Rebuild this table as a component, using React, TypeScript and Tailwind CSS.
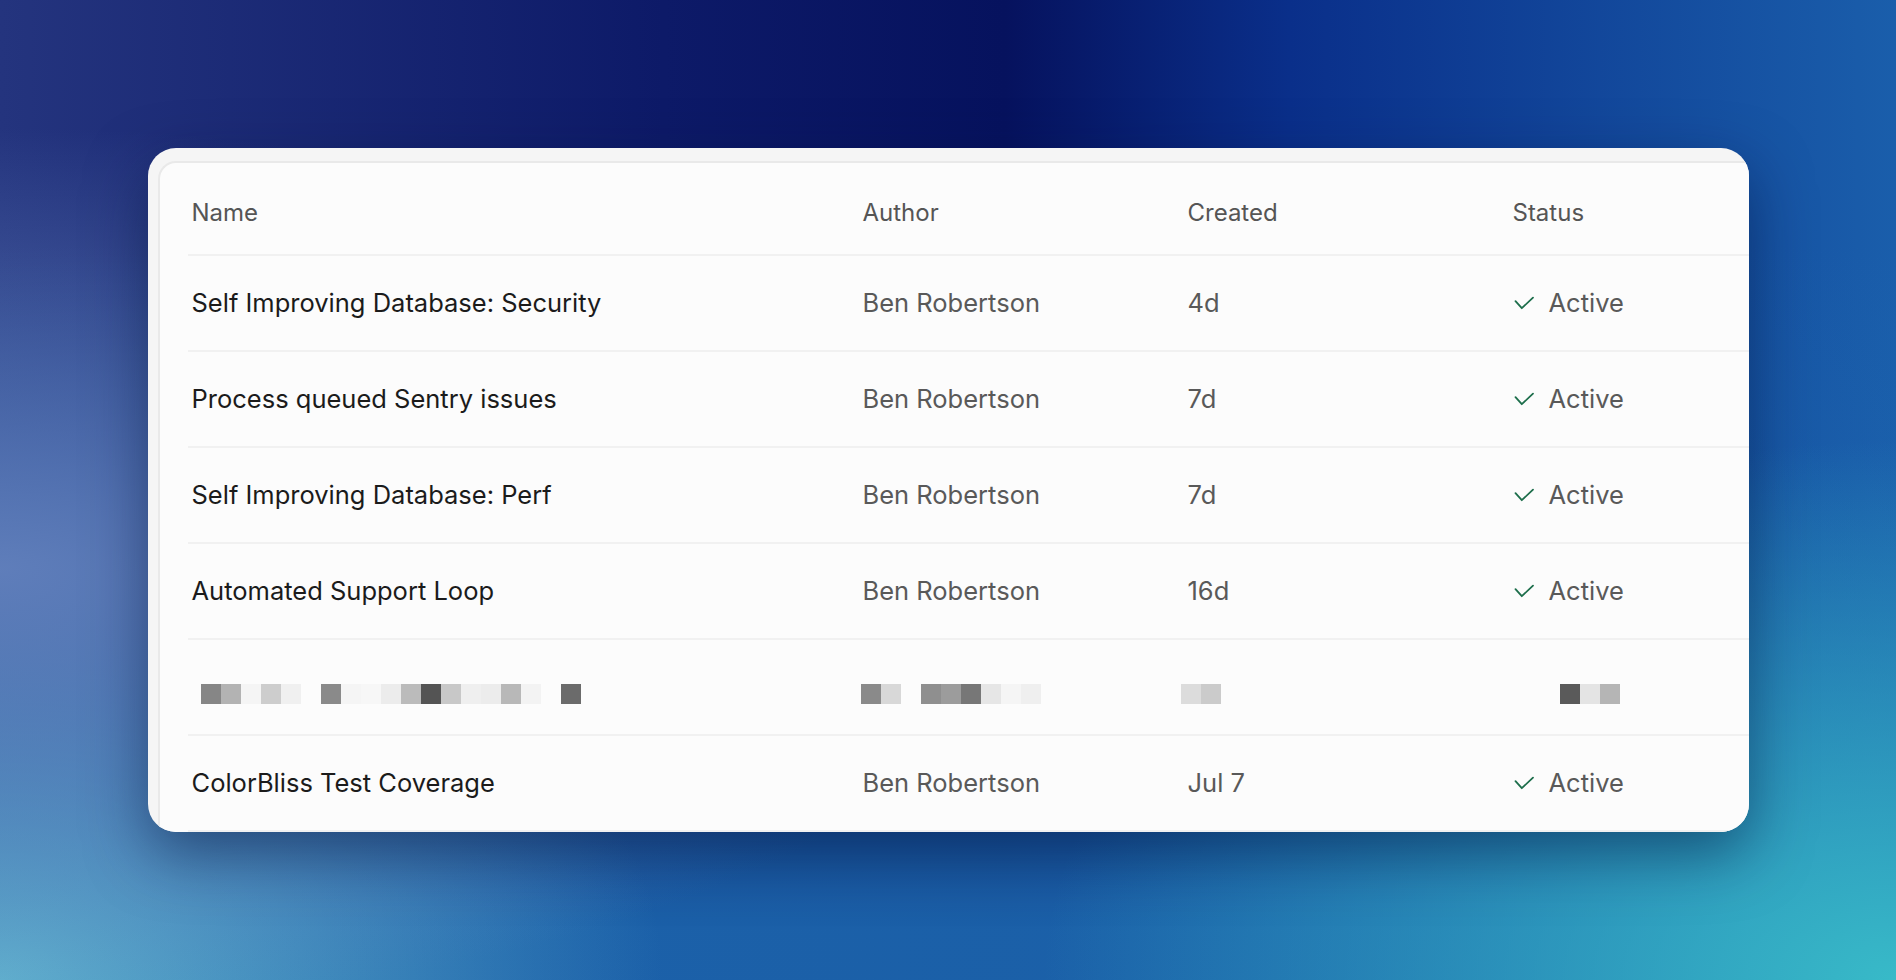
import type { ReactNode } from "react";

type Row = {
  name: string;
  author: string;
  created: string;
};

const rows: Row[] = [
  { name: "Self Improving Database: Security", author: "Ben Robertson", created: "4d" },
  { name: "Process queued Sentry issues", author: "Ben Robertson", created: "7d" },
  { name: "Self Improving Database: Perf", author: "Ben Robertson", created: "7d" },
  { name: "Automated Support Loop", author: "Ben Robertson", created: "16d" },
];

// redacted row, one entry per 20px block (null = empty)
const blurName = ["#868686", "#b3b3b3", "#f5f5f5", "#cdcdcd", "#f0f0f0", null, "#8a8a8a", "#f5f5f5", "#f7f7f7", "#ececec", "#bbbbbb", "#545454", "#c8c8c8", "#efefef", "#ececec", "#b8b8b8", "#f3f3f3", null, "#6b6b6b"];
const blurAuthor = ["#8a8a8a", "#d8d8d8", null, "#8f8f8f", "#9c9c9c", "#777777", "#e6e6e6", "#f5f5f5", "#efefef"];
const blurCreated = ["#dcdcdc", "#cbcbcb"];
const blurStatus = ["#5a5a5a", "#e4e4e4", "#b5b5b5"];

function Blocks({ colors }: { colors: (string | null)[] }) {
  return (
    <div className="flex">
      {colors.map((c, i) => (
        <div key={i} className="h-[20px] w-[20px]" style={{ backgroundColor: c ?? "transparent" }} />
      ))}
    </div>
  );
}

function Check() {
  return (
    <svg width="20" height="14" viewBox="0 0 20 14" fill="none" className="shrink-0">
      <path d="M1.5 5.2 L7.8 12.2 L19 1.6" stroke="#1d6e4b" strokeWidth="1.8" strokeLinecap="round" strokeLinejoin="round" />
    </svg>
  );
}

function Line({ children, className = "" }: { children: ReactNode; className?: string }) {
  return (
    <div className={`flex h-[96px] items-center border-b-2 border-[#f1f1f1] ${className}`}>
      {children}
    </div>
  );
}

function Status() {
  return (
    <div className="flex items-center gap-[15px] pl-[6px] text-[#595959]">
      <Check />
      <span>Active</span>
    </div>
  );
}

export default function App() {
  return (
    <div className="flex h-[980px] w-full items-center justify-center overflow-hidden bg-[radial-gradient(ellipse_55%_45%_at_0%_58%,rgba(98,128,188,0.95),transparent),radial-gradient(ellipse_45%_55%_at_100%_100%,rgba(56,186,200,1),transparent),radial-gradient(ellipse_35%_45%_at_0%_100%,rgba(96,176,206,1),transparent),linear-gradient(to_bottom,transparent_25%,rgba(28,100,172,0.95)_95%),linear-gradient(to_right,#24347e,#0d1a68_35%,#06125e_53%,#0a2f8a_68%,#1a5eab)] font-['Inter',sans-serif]">
      <div className="h-[684px] w-[1601px] overflow-hidden rounded-[28px] bg-[#f5f5f5] pl-[10px] pt-[13px] shadow-[0_22px_60px_rgba(2,18,60,0.5)]">
        <div className="h-[720px] w-[1640px] rounded-tl-[18px] border-l-2 border-t-2 border-[#e9e9e9] bg-[#fcfcfc] pl-[28px]">
          <div className="flex h-[93px] items-center border-b-2 border-[#f1f1f1] pt-[9px] text-[24px] text-[#555555]">
            <div className="w-[670px] pl-[4px]">Name</div>
            <div className="w-[325px] pl-[5px]">Author</div>
            <div className="w-[325px] pl-[5px]">Created</div>
            <div className="pl-[5px]">Status</div>
          </div>

          {rows.map((r) => (
            <Line key={r.name} className="text-[25.5px]">
              <div className="w-[670px] pl-[4px] text-[#1b1b1b]">{r.name}</div>
              <div className="w-[325px] pl-[5px] text-[#595959]">{r.author}</div>
              <div className="w-[325px] pl-[5px] text-[#595959]">{r.created}</div>
              <Status />
            </Line>
          ))}

          <Line>
            <div className="mt-[13px] w-[670px] pl-[13px]">
              <Blocks colors={blurName} />
            </div>
            <div className="mt-[13px] w-[325px] pl-[3px]">
              <Blocks colors={blurAuthor} />
            </div>
            <div className="mt-[13px] w-[325px] -ml-[2px]">
              <Blocks colors={blurCreated} />
            </div>
            <div className="mt-[13px] pl-[54px]">
              <Blocks colors={blurStatus} />
            </div>
          </Line>

          <Line className="border-b-0 text-[25.5px]">
            <div className="w-[670px] pl-[4px] text-[#1b1b1b]">ColorBliss Test Coverage</div>
            <div className="w-[325px] pl-[5px] text-[#595959]">Ben Robertson</div>
            <div className="w-[325px] pl-[5px] text-[#595959]">Jul 7</div>
            <Status />
          </Line>
        </div>
      </div>
    </div>
  );
}
